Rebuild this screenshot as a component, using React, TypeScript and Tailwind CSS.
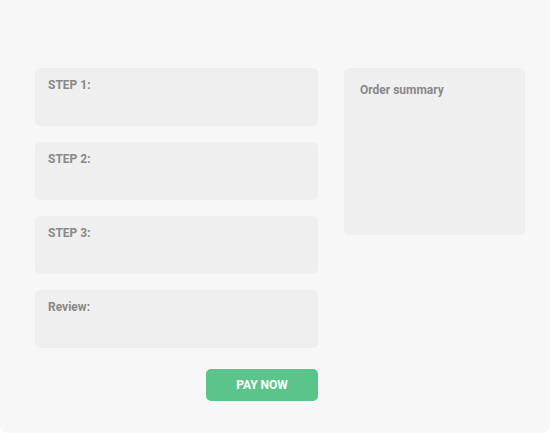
const steps = ['STEP 1:', 'STEP 2:', 'STEP 3:', 'Review:']

export default function App() {
  return (
    <div className="h-[433px] w-[550px] overflow-hidden rounded-b-lg bg-[#f7f7f7] font-['Roboto',sans-serif]">
      <div className="flex items-start pl-[35px] pt-[68px]">
        <div className="flex w-[283px] flex-col gap-4">
          {steps.map((s) => (
            <div key={s} className="h-[58px] rounded-[5px] bg-[#efefef] px-[13px] pt-[9px]">
              <p className="text-[12px] font-bold leading-4 text-[#888888]">{s}</p>
            </div>
          ))}
          <button className="mt-[5px] h-8 w-[112px] self-end rounded-[5px] bg-[#5bc48a] text-[12px] font-bold text-white">
            PAY NOW
          </button>
        </div>
        <div className="ml-[26px] h-[167px] w-[181px] rounded-[5px] bg-[#efefef] px-4 pt-[14px]">
          <p className="text-[12px] font-bold leading-4 text-[#888888]">Order summary</p>
        </div>
      </div>
    </div>
  )
}
